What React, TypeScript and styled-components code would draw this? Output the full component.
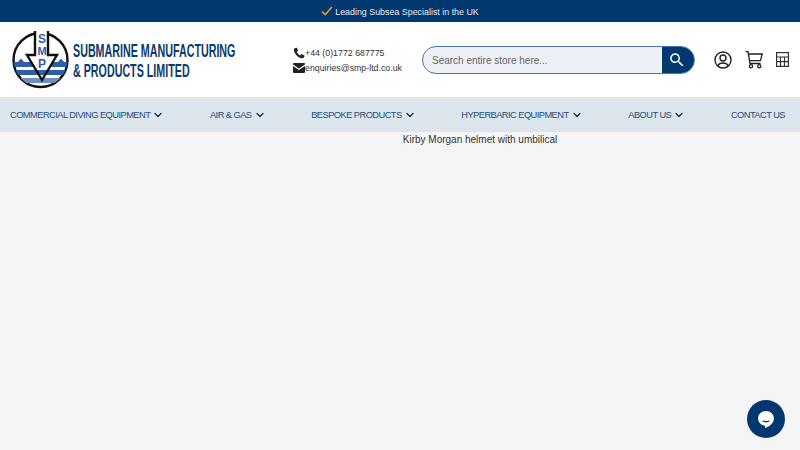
import React from 'react';
import styled, { createGlobalStyle } from 'styled-components';
import { ChevronDown } from 'lucide-react';

const navItems = [
  { label: 'COMMERCIAL DIVING EQUIPMENT', hasMenu: true },
  { label: 'AIR & GAS', hasMenu: true },
  { label: 'BESPOKE PRODUCTS', hasMenu: true },
  { label: 'HYPERBARIC EQUIPMENT', hasMenu: true },
  { label: 'ABOUT US', hasMenu: true },
  { label: 'CONTACT US', hasMenu: false },
];

const LogoMark = () => (
  <svg width="60" height="60" viewBox="0 0 60 60">
    <defs>
      <clipPath id="disc">
        <circle cx="28.5" cy="30" r="27" />
      </clipPath>
    </defs>
    <circle cx="28.5" cy="30" r="27" fill="#fff" stroke="#111" strokeWidth="2.4" />
    <g clipPath="url(#disc)">
      <path d="M0 32 L6 32 L9 28.5 L12 32 L46 32 L49 28.5 L52 32 L60 32 L60 37 L0 37 Z" fill="#2f5ea8" />
    </g>
    <path d="M23 1 V25 H15 L30 50 L45 25 H36 V1 Z" fill="#fff" />
    <g clipPath="url(#disc)">
      <rect x="0" y="40" width="60" height="5" fill="#2f5ea8" />
      <rect x="0" y="48" width="60" height="5" fill="#6d8fc6" />
    </g>
    <path d="M23 1 V25 H15 L30 50 L45 25 H36 V1" fill="none" stroke="#111" strokeWidth="2.4" />
    <text x="30" y="13" textAnchor="middle" fontFamily="Liberation Sans" fontWeight="700" fontSize="12" fill="#2f5ea8">S</text>
    <text x="30" y="25" textAnchor="middle" fontFamily="Liberation Sans" fontWeight="700" fontSize="11" fill="#2f5ea8">M</text>
    <text x="30" y="38" textAnchor="middle" fontFamily="Liberation Sans" fontWeight="700" fontSize="12" fill="#2f5ea8">P</text>
  </svg>
);

const PhoneIcon = () => (
  <svg width="12" height="12" viewBox="0 0 24 24" fill="#222">
    <path d="M6.6 1.5 L2.5 3 C1 5 1.5 9 5 14 C9 20 15 23.5 20.5 22.5 L23 18.5 C23.2 18 23 17.5 22.6 17.2 L17.8 14.4 C17.3 14.1 16.7 14.2 16.3 14.7 L14.5 17 C12 16 8.5 12 7.5 9.5 L9.8 7.5 C10.2 7.1 10.3 6.6 10 6 L7.8 1.9 C7.5 1.5 7 1.4 6.6 1.5 Z" />
  </svg>
);

const MailIcon = () => (
  <svg width="12" height="10" viewBox="0 0 24 20" fill="#222">
    <path d="M2 0 H22 C23 0 24 1 24 2 V3 L12 11 L0 3 V2 C0 1 1 0 2 0 Z" />
    <path d="M0 6 L12 14 L24 6 V18 C24 19 23 20 22 20 H2 C1 20 0 19 0 18 Z" />
  </svg>
);

const CheckIcon = () => (
  <svg width="12" height="10" viewBox="0 0 12 10" fill="none">
    <path d="M1 5.5 L4.2 8.6 L11 1" stroke="#f39a1f" strokeWidth="1.5" />
  </svg>
);

const SearchIcon = () => (
  <svg width="18" height="18" viewBox="0 0 24 24" fill="#fff">
    <path d="M15.5 14h-.79l-.28-.27C15.41 12.59 16 11.11 16 9.5 16 5.91 13.09 3 9.5 3S3 5.91 3 9.5 5.91 16 9.5 16c1.61 0 3.09-.59 4.23-1.57l.27.28v.79l5 4.99L20.49 19l-4.99-5zm-6 0C7.01 14 5 11.99 5 9.5S7.01 5 9.5 5 14 7.01 14 9.5 11.99 14 9.5 14z" />
  </svg>
);

const AccountIcon = () => (
  <svg width="18" height="18" viewBox="0 0 18 18" fill="none" stroke="#222" strokeWidth="1.4">
    <circle cx="9" cy="9" r="8" />
    <circle cx="9" cy="7" r="3" />
    <path d="M3.6 14.8 C5 12.6 7 12 9 12 C11 12 13 12.6 14.4 14.8" />
  </svg>
);

const CartIcon = () => (
  <svg width="18" height="18" viewBox="0 0 18 18" fill="none" stroke="#222" strokeWidth="1.3">
    <path d="M0.5 0.7 H3 L5 12.5 H15.5" />
    <path d="M3.4 3 H17.2 L15.4 9.6 H4.5" />
    <circle cx="6" cy="15.3" r="1.6" />
    <circle cx="14.3" cy="15.3" r="1.6" />
  </svg>
);

const CalculatorIcon = () => (
  <svg width="13" height="15" viewBox="0 0 13 15" fill="none" stroke="#333" strokeWidth="1.2">
    <rect x="0.6" y="0.6" width="11.8" height="13.8" />
    <path d="M0.6 5 H12.4 M0.6 9.7 H12.4 M4.5 5 V14.4 M8.5 5 V14.4" />
  </svg>
);

const ChatIcon = () => (
  <svg width="20" height="20" viewBox="0 0 24 24">
    <path d="M12 2.5 C6.5 2.5 2.5 6.5 2.5 11.5 C2.5 16.5 6.5 20 11 20 L11 22.8 C15 21.5 21.5 18 21.5 11.5 C21.5 6.5 17.5 2.5 12 2.5 Z" fill="#fff" />
    <path d="M8.5 14.5 C10 15.6 14 15.6 15.5 14.5" stroke="#00386f" strokeWidth="1.6" fill="none" strokeLinecap="round" />
  </svg>
);

const App = () => (
  <>
    <GlobalStyle />
    <Page>
      <TopBar>
        <CheckIcon />
        <span>Leading Subsea Specialist in the UK</span>
      </TopBar>
      <Header>
        <Logo>
          <LogoMark />
          <LogoName>
            <LogoLine>SUBMARINE MANUFACTURING</LogoLine>
            <LogoLine>&amp; PRODUCTS LIMITED</LogoLine>
          </LogoName>
        </Logo>
        <Contact>
          <ContactRow>
            <PhoneIcon />
            <span>+44 (0)1772 687775</span>
          </ContactRow>
          <ContactRow>
            <MailIcon />
            <span>enquiries@smp-ltd.co.uk</span>
          </ContactRow>
        </Contact>
        <SearchBox>
          <SearchInput placeholder="Search entire store here..." />
          <SearchButton aria-label="Search">
            <SearchIcon />
          </SearchButton>
        </SearchBox>
        <Actions>
          <AccountIcon />
          <CartIcon />
          <CalculatorIcon />
        </Actions>
      </Header>
      <Nav>
        {navItems.map((item) => (
          <NavItem key={item.label}>
            {item.label}
            {item.hasMenu && <ChevronDown size={12} strokeWidth={2.6} color="#1e2f45" />}
          </NavItem>
        ))}
      </Nav>
      <Caption>Kirby Morgan helmet with umbilical</Caption>
      <ChatButton aria-label="Chat">
        <ChatIcon />
      </ChatButton>
    </Page>
  </>
);

const GlobalStyle = createGlobalStyle`
  html, body {
    margin: 0;
    padding: 0;
    background: #f5f5f5;
  }
  body {
    font-family: "Liberation Sans", Arial, sans-serif;
    overflow: hidden;
  }
`;

const Page = styled.div`
  width: 800px;
  height: 450px;
  overflow: hidden;
`;

const TopBar = styled.div`
  height: 22px;
  padding-top: 1px;
  box-sizing: border-box;
  background: #00386f;
  color: #e4eaf2;
  font-size: 8.9px;
  display: flex;
  align-items: center;
  justify-content: center;
  gap: 2px;
  svg {
    margin-bottom: 1px;
  }
`;

const Header = styled.header`
  height: 75px;
  background: #fff;
  display: flex;
  align-items: center;
  padding-left: 12px;
  box-sizing: border-box;
`;

const Logo = styled.div`
  display: flex;
  align-items: center;
  flex-shrink: 0;
  gap: 1px;
  width: 281px;
  margin-top: 1px;
  svg {
    flex-shrink: 0;
  }
`;

const LogoName = styled.div`
  display: flex;
  flex-direction: column;
  gap: 3px;
  margin-top: 3px;
  transform: scaleX(0.595);
  transform-origin: left center;
`;

const LogoLine = styled.div`
  color: #0c3a6e;
  font-weight: 700;
  font-size: 18px;
  line-height: 17px;
  white-space: nowrap;
`;

const Contact = styled.div`
  width: 129px;
  flex-shrink: 0;
  padding-top: 2px;
  display: flex;
  flex-direction: column;
  gap: 3px;
  font-size: 8.8px;
  color: #333;
`;

const ContactRow = styled.div`
  display: flex;
  align-items: center;
  height: 12px;
`;

const SearchBox = styled.div`
  width: 273px;
  height: 28px;
  flex-shrink: 0;
  display: flex;
  border-radius: 14px;
  border: 1px solid #4a77ab;
  box-sizing: border-box;
  background: #edf0f5;
  overflow: hidden;
`;

const SearchInput = styled.input`
  flex: 1;
  min-width: 0;
  border: 0;
  outline: 0;
  background: transparent;
  padding: 1px 9px 0;
  font-family: inherit;
  font-size: 10px;
  color: #555;
  &::placeholder {
    color: #666;
    opacity: 1;
  }
`;

const SearchButton = styled.button`
  width: 32px;
  border: 0;
  padding: 0 2px 0 0;
  background: #00386f;
  display: flex;
  align-items: center;
  justify-content: center;
`;

const Actions = styled.div`
  display: flex;
  align-items: center;
  margin-left: 19px;
  gap: 13px;
  color: #222;
`;

const Nav = styled.nav`
  height: 35px;
  background: #dce4ec;
  display: flex;
  align-items: center;
  justify-content: space-between;
  padding: 0 15px 0 10px;
`;

const NavItem = styled.div`
  display: flex;
  align-items: center;
  gap: 2px;
  color: #1f4e7c;
  font-size: 9.3px;
  letter-spacing: -0.55px;
  white-space: nowrap;
`;

const Caption = styled.p`
  margin: 0;
  padding-left: 160px;
  line-height: 15px;
  text-align: center;
  color: #333;
  font-size: 10px;
`;

const ChatButton = styled.button`
  position: fixed;
  left: 747px;
  top: 400px;
  width: 38px;
  height: 38px;
  border: 0;
  padding: 0;
  border-radius: 50%;
  background: #00386f;
  display: flex;
  align-items: center;
  justify-content: center;
`;

export default App;
